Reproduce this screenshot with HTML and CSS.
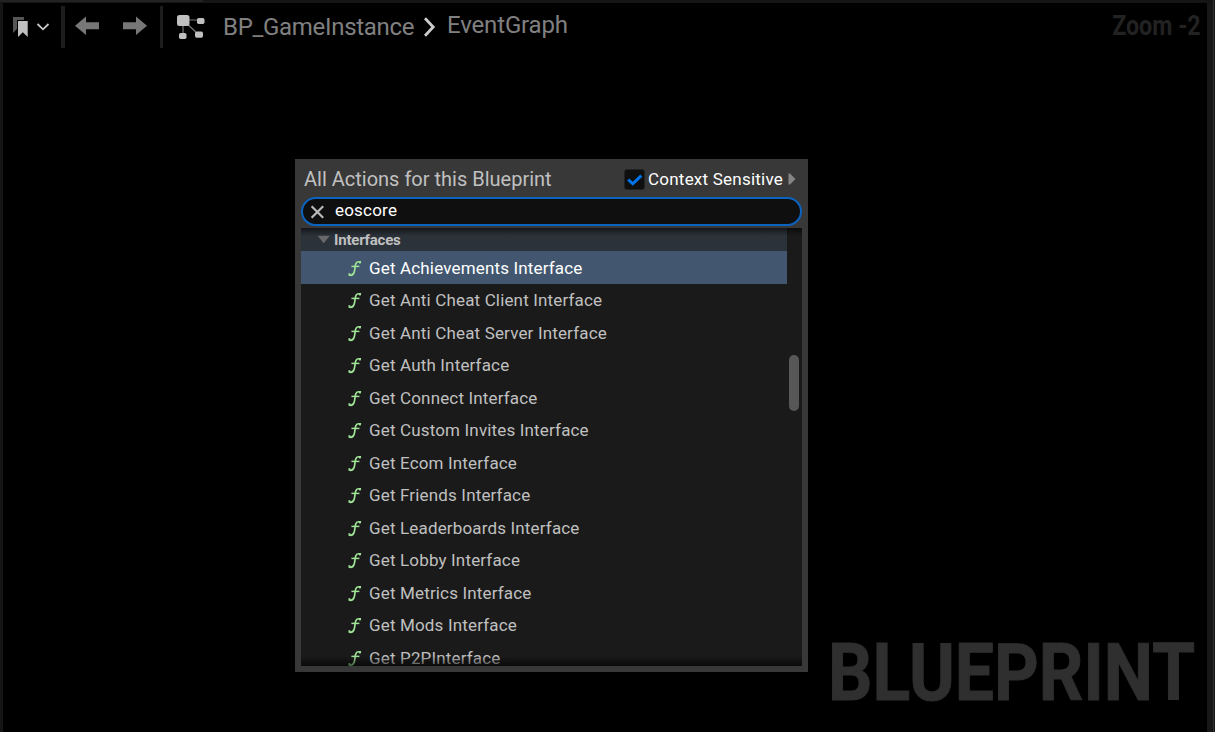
FILE: index.html
```html
<!DOCTYPE html>
<html lang="en">
<head>
<meta charset="utf-8">
<title>Blueprint Event Graph</title>
<link rel="stylesheet" href="styles.css">
</head>
<body>
<svg class="defs" width="0" height="0" aria-hidden="true">
  <symbol id="fn" viewBox="0 0 14 18">
    <path d="M1.2 16C3 16.6 4.9 16.1 6 13.6C7.1 11 6.9 7 7.8 4.7C8.5 2.9 10.4 2.5 12.6 2.9" fill="none" stroke="#a0e497" stroke-width="1.7"/>
    <path d="M3.4 7.4H11.4" fill="none" stroke="#a0e497" stroke-width="1.5"/>
    <path d="M10.6 2H13.2L12.7 4.6H11.2Z" fill="#a0e497"/><path d="M.4 14.2H2.4L2.7 16.8H.6Z" fill="#a0e497"/>
  </symbol>
</svg>
<main class="graph">
  <header class="toolbar">
    <svg class="bookmark" width="38" height="24" viewBox="0 0 38 24">
      <path d="M0 2H11V5H4V14L0 18Z" fill="#555"/>
      <path d="M5 6H14.7V22L9.8 17.2L5 22Z" fill="#c0c0c0"/>
      <path d="M24.5 9L30 14.3L35.5 9" fill="none" stroke="#c8c8c8" stroke-width="1.8"/>
    </svg>
    <span class="divider divider-first"></span>
    <svg class="arrow" width="24" height="20" viewBox="0 0 24 20"><path d="M0 9.7L11 .5V6.2H24V13.2H11V19Z" fill="#777"/></svg>
    <svg class="arrow arrow-next" width="24" height="20" viewBox="0 0 24 20"><path d="M24 9.7L13 .5V6.2H0V13.2H13V19Z" fill="#777"/></svg>
    <span class="divider divider-second"></span>
    <svg class="nodes" width="28" height="26" viewBox="0 0 28 26">
      <path d="M6 6H23M6 6V22M6 6L22 21" stroke="#777" stroke-width="1.2" fill="none"/>
      <g fill="#c0c0c0"><rect x="0" y="1" width="12.5" height="11" rx="2.5"/><rect x="20" y="4" width="7.5" height="6" rx="1.7"/><rect x="2" y="19" width="7.5" height="6" rx="1.7"/><rect x="18" y="17.5" width="8" height="6.3" rx="1.7"/></g>
    </svg>
    <span class="crumb crumb-root">BP_GameInstance</span>
    <svg class="chevron" width="14" height="20" viewBox="0 0 14 20"><path d="M2 1.2L10.2 10L2 18.8" fill="none" stroke="#ccc" stroke-width="2.8"/></svg>
    <span class="crumb crumb-leaf">EventGraph</span>
    <span class="zoom">Zoom -2</span>
  </header>

  <section class="menu">
    <div class="menu-head">
      <h1 class="menu-title">All Actions for this Blueprint</h1>
      <span class="check"><svg width="20" height="20" viewBox="0 0 20 20"><path d="M3.2 9.6L7.8 13.8L16.3 5.6" fill="none" stroke="#0074eb" stroke-width="3"/></svg></span>
      <span class="context">Context Sensitive</span>
      <svg class="expand" width="8" height="12" viewBox="0 0 8 12"><path d="M.5 .5H2L7.5 6L2 11.5H.5Z" fill="#858585"/></svg>
    </div>
    <div class="search">
      <svg width="14" height="14" viewBox="0 0 14 14"><path d="M1.6 1.2L13.2 12.8M13.2 1.2L1.6 12.8" stroke="#bbb" stroke-width="2.2"/></svg>
      <span class="query">eoscore</span>
    </div>
    <div class="list">
      <div class="category"><svg width="13" height="9" viewBox="0 0 13 9"><path d="M.6 .8H12.8L6.7 8.3Z" fill="#69696c"/></svg><span>Interfaces</span></div>
      <ul class="rows">
        <li class="row selected"><svg class="fn"><use href="#fn"/></svg><span>Get Achievements Interface</span></li>
        <li class="row"><svg class="fn"><use href="#fn"/></svg><span>Get Anti Cheat Client Interface</span></li>
        <li class="row"><svg class="fn"><use href="#fn"/></svg><span>Get Anti Cheat Server Interface</span></li>
        <li class="row"><svg class="fn"><use href="#fn"/></svg><span>Get Auth Interface</span></li>
        <li class="row"><svg class="fn"><use href="#fn"/></svg><span>Get Connect Interface</span></li>
        <li class="row"><svg class="fn"><use href="#fn"/></svg><span>Get Custom Invites Interface</span></li>
        <li class="row"><svg class="fn"><use href="#fn"/></svg><span>Get Ecom Interface</span></li>
        <li class="row"><svg class="fn"><use href="#fn"/></svg><span>Get Friends Interface</span></li>
        <li class="row"><svg class="fn"><use href="#fn"/></svg><span>Get Leaderboards Interface</span></li>
        <li class="row"><svg class="fn"><use href="#fn"/></svg><span>Get Lobby Interface</span></li>
        <li class="row"><svg class="fn"><use href="#fn"/></svg><span>Get Metrics Interface</span></li>
        <li class="row"><svg class="fn"><use href="#fn"/></svg><span>Get Mods Interface</span></li>
        <li class="row"><svg class="fn"><use href="#fn"/></svg><span>Get P2PInterface</span></li>
      </ul>
      <span class="scrollbar"></span>
    </div>
  </section>
  <div class="watermark">BLUEPRINT</div>
</main>
</body>
</html>
```
FILE: styles.css
```css
* { box-sizing: border-box; }
body { margin: 0; background: #000; font-family: Roboto, sans-serif; overflow: hidden; }
svg { display: block; flex: none; }
.defs { position: absolute; }
.graph {
  position: relative;
  width: 1215px;
  height: 732px;
  border-left: 3px solid #151515;
  border-top: 3px solid #151515;
  border-right: 8px solid #171717;
  overflow: hidden;
}

/* edges of the neighbouring panels */
body::before { content: ""; position: absolute; z-index: 2; left: 0; top: 0; width: 203px; height: 2px; background: #222; }
body::after { content: ""; position: absolute; z-index: 2; left: 1213px; top: 0; width: 1px; height: 732px; background: #303030; }

.toolbar { display: flex; align-items: flex-start; height: 50px; padding: 3px 6px 0 10px; white-space: nowrap; }
.bookmark { margin-top: 9px; }
.divider { flex: none; height: 42px; background: #1d1d1d; }
.divider-first { width: 4px; margin-left: 10px; }
.divider-second { width: 3px; margin-left: 13px; }
.arrow { margin: 10px 0 0 10px; }
.arrow-next { margin-left: 24px; }
.nodes { margin: 8px 0 0 14px; }
.crumb { flex: none; font-size: 24px; line-height: 28px; color: #808080; }
.crumb-root { width: 191px; margin: 7px 0 0 18px; letter-spacing: -.3px; }
.chevron { margin: 11px 0 0 9px; }
.crumb-leaf { margin: 5px 0 0 10px; letter-spacing: -.15px; }
.zoom { margin: 3px 0 0 auto; font-size: 28px; font-weight: 700; line-height: 33px; color: #222; transform: scaleX(.83); transform-origin: right; }

.menu {
  position: absolute;
  left: 292px;
  top: 156px;
  width: 513px;
  height: 513px;
  padding: 0 6px 6px;
  background: #383838;
}
.menu-head { display: flex; align-items: center; height: 38px; padding: 2px 5px 0 3px; white-space: nowrap; }
.menu-title { margin: 0; width: 320px; font-size: 20px; font-weight: 400; color: #c0c0c0; }
.check { width: 21px; height: 21px; background: #0f0f0f; border: 1px solid #222; border-radius: 3px; }
.context { width: 136px; margin-left: 3px; font-size: 17px; color: #fff; letter-spacing: .23px; }
.expand { margin-left: 4px; }
.search {
  display: flex;
  align-items: center;
  gap: 11px;
  height: 29px;
  padding-left: 7px;
  border: 2px solid #0b63c0;
  border-radius: 15px;
  background: #0f0f0f;
}
.query { font-size: 17px; line-height: 20px; color: #fff; letter-spacing: .2px; margin-top: -3px; }
.list { position: relative; height: 438px; margin-top: 2px; background: #1a1a1a; overflow: hidden; }
.list::before, .list::after { content: ""; position: absolute; z-index: 1; left: 0; right: 0; }
.list::before { top: 0; height: 8px; background: linear-gradient(rgba(0,0,0,.55), transparent); }
.list::after { bottom: 0; height: 10px; background: linear-gradient(transparent, rgba(0,0,0,.6)); }
.category { display: flex; align-items: center; gap: 4px; width: 486px; height: 23px; padding-left: 16px; background: #2c323a; font-size: 15px; font-weight: 700; color: #c0c0c0; letter-spacing: -.2px; }
.rows { margin: 0; padding: 0; list-style: none; }
.row { display: flex; align-items: center; gap: 7px; width: 486px; height: 32.5px; padding: 1px 0 0 47px; font-size: 17px; color: #c0c0c0; letter-spacing: .16px; white-space: nowrap; }
.selected { background: #42576f; color: #fff; }
.fn { width: 14px; height: 18px; }
.scrollbar { position: absolute; right: 3px; top: 127px; width: 10px; height: 56px; border-radius: 5px; background: #575757; }

.watermark {
  position: absolute;
  left: 825px;
  top: 623px;
  font-size: 80px;
  font-weight: 700;
  line-height: 94px;
  color: #2f2f2f;
  -webkit-text-stroke: 1px #2f2f2f;
  transform: scaleX(.87);
  transform-origin: left;
}
```
